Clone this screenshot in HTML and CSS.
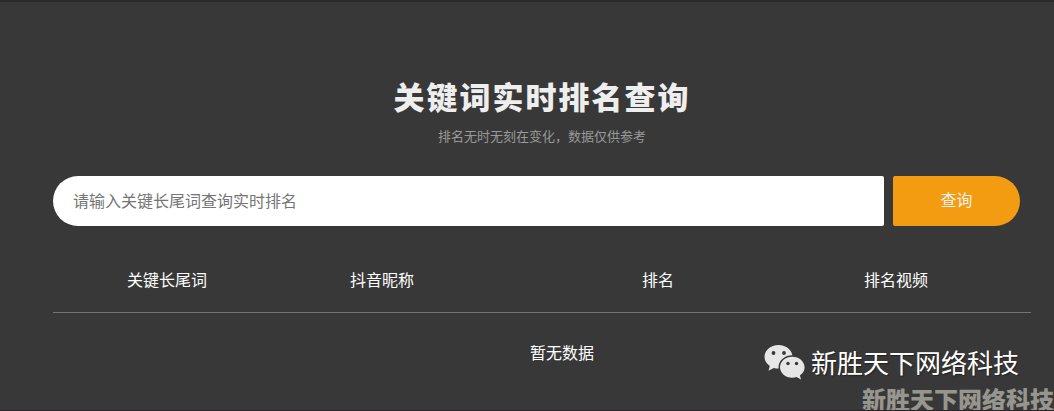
FILE: index.html
```html
<!DOCTYPE html>
<html lang="zh-CN">
<head>
    <meta charset="UTF-8">
    <meta name="viewport" content="width=device-width, initial-scale=1.0">
    <title>关键词实时排名查询</title>
    <link rel="stylesheet" href="styles.css">
</head>
<body>
    <div class="container">
        <h1>关键词实时排名查询</h1>
        <p class="tips">排名无时无刻在变化，数据仅供参考</p>

        <form class="search">
            <input type="text" class="search-input" placeholder="请输入关键长尾词查询实时排名">
            <button type="button" class="search-btn">查询</button>
        </form>

        <ul class="list-head">
            <li>关键长尾词</li>
            <li>抖音昵称</li>
            <li>排名</li>
            <li>排名视频</li>
        </ul>
        <div class="empty">暂无数据</div>
    </div>

    <div class="account">
        <svg class="account-icon" width="42" height="36" viewBox="0 0 42 36">
            <path class="bubble" d="M14.500 1C6.700 1 .5 6.200.5 12.800c0 3.800 2 7 5.300 9.200L4.500 26.700l5.300-2.800c1.500.4 3.100.7 4.700.7 7.800 0 14-5.300 14-11.800S22.300 1 14.500 1z"/>
            <path class="bubble front" d="M28.300 12.700c-6.900 0-12.300 4.700-12.300 10.500s5.400 10.500 12.300 10.500c1.500 0 2.900-.2 4.200-.6l4.600 2.400-1.200-4.100c2.900-1.900 4.700-4.900 4.700-8.200 0-5.800-5.500-10.500-12.300-10.500z"/>
            <circle class="eye" cx="9.500" cy="9" r="1.900"/>
            <circle class="eye" cx="20" cy="9" r="1.900"/>
            <circle class="eye" cx="24" cy="19.500" r="1.700"/>
            <circle class="eye" cx="32.500" cy="19.500" r="1.700"/>
        </svg>
        <span>新胜天下网络科技</span>
    </div>
    <div class="watermark">新胜天下网络科技</div>
</body>
</html>
```

FILE: styles.css
```css
* {
    box-sizing: border-box;
}
body {
    position: relative;
    height: 411px;
    margin: 0;
    overflow: hidden;
    border-top: 2px solid #2a2a2a;
    border-bottom: 1px solid #2b2529;
    background-color: #383838;
    color: #fff;
    font-family: "Noto Sans CJK SC", sans-serif;
    font-size: 16px;
}
.container {
    width: 978px;
    margin-left: 53px;
    padding-top: 72px;
}
h1 {
    margin: 0;
    color: #eee;
    font-size: 31px;
    font-weight: 900;
    line-height: 44px;
    letter-spacing: 2px;
    text-align: center;
}
.tips {
    margin: 8px 0 30px;
    color: #999;
    font-size: 13px;
    line-height: 20px;
    text-align: center;
}
.search {
    display: flex;
    gap: 9px;
}
.search-input {
    width: 831px;
    height: 50px;
    padding: 0 20px 3px;
    border: none;
    border-radius: 25px 2px 2px 25px;
    background-color: #fff;
    font-family: inherit;
    font-size: 16px;
}
.search-input::placeholder {
    color: #757575;
}
.search-btn {
    width: 127px;
    height: 50px;
    padding: 0 0 4px;
    border: none;
    border-radius: 2px 25px 25px 2px;
    background-color: #f39c12;
    color: #f0f0f0;
    font-family: inherit;
    font-size: 16px;
}
.list-head {
    display: grid;
    grid-template-columns: 148px 282px 270px 206px;
    margin: 24px 0 0;
    padding: 0 0 4px 40px;
    border-bottom: 1px solid #737373;
    list-style: none;
    line-height: 58px;
    text-align: center;
}
.empty {
    padding-left: 40px;
    line-height: 78px;
    text-align: center;
}
.account {
    position: absolute;
    top: 341px;
    left: 764px;
    display: flex;
    gap: 5px;
    font-size: 26px;
    line-height: 38px;
    white-space: nowrap;
    text-shadow: 1px 1px 1px #222;
}
.account-icon {
    margin-top: 1px;
}
.bubble {
    fill: #e6e6e6;
}
.front {
    stroke: #383838;
    stroke-width: 3px;
    paint-order: stroke;
}
.eye {
    fill: #383838;
}
.watermark {
    position: absolute;
    top: 385px;
    left: 862px;
    color: #96968f;
    font-size: 24px;
    font-weight: 900;
    line-height: 24px;
    white-space: nowrap;
}
```
